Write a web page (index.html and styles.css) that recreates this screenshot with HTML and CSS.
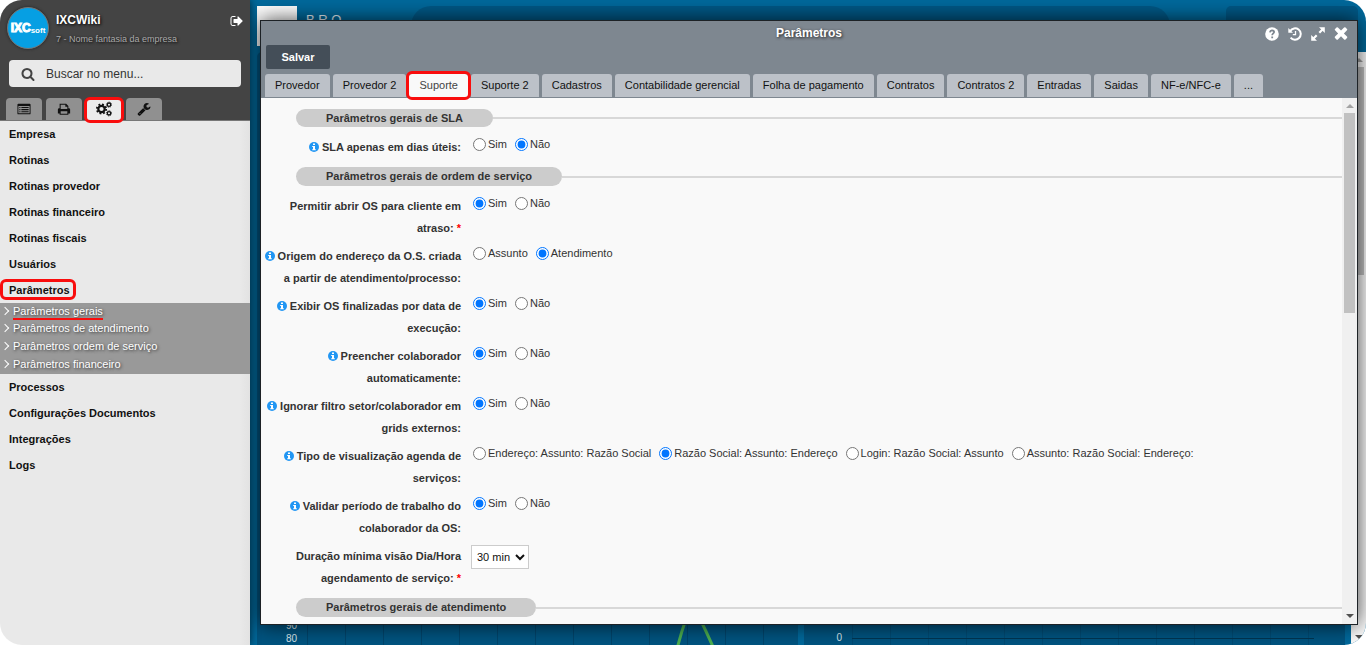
FILE: index.html
```html
<!DOCTYPE html>
<html lang="pt-BR">
<head>
<meta charset="utf-8">
<title>IXCWiki - Parâmetros</title>
<link rel="stylesheet" href="styles.css">
</head>
<body>
<svg class="defs" aria-hidden="true">
  <symbol id="info" viewBox="0 0 10 10"><circle cx="5" cy="5" r="5" fill="#2196f3"/><path d="M4 1.5h2v1.4H4zM3.2 4H6v3.2h.8v1H3.2v-1H4V5h-.8z" fill="#fff"/></symbol>
</svg>
<div class="app">
  <aside class="sidebar">
    <header class="side-head">
      <div class="profile">
        <div class="logo"><b>IXC</b><span>soft</span></div>
        <div class="who">
          <strong>IXCWiki</strong>
          <small>7 - Nome fantasia da empresa</small>
        </div>
        <button class="logout" aria-label="Sair"><svg viewBox="0 0 1792 1792"><path d="M704 1440q0 4 1 20t.5 26.5-3 23.5-10 19.5-20.5 6.5h-320q-119 0-203.5-84.5t-84.5-203.5v-704q0-119 84.5-203.5t203.5-84.5h320q13 0 22.5 9.5t9.5 22.5q0 4 1 20t.5 26.5-3 23.5-10 19.5-20.5 6.5h-320q-66 0-113 47t-47 113v704q0 66 47 113t113 47h312l11.5 1 11.5 3 8 5.5 7 9 2 13.5zm928-544q0 26-19 45l-544 544q-19 19-45 19t-45-19-19-45v-288h-448q-26 0-45-19t-19-45v-384q0-26 19-45t45-19h448v-288q0-26 19-45t45-19 45 19l544 544q19 19 19 45z"/></svg></button>
      </div>
      <label class="search">
        <svg viewBox="0 0 1792 1792"><path d="M1216 832q0-185-131.5-316.5t-316.5-131.5-316.5 131.5-131.5 316.5 131.5 316.5 316.5 131.5 316.5-131.5 131.5-316.5zm512 832q0 52-38 90t-90 38q-54 0-90-38l-343-342q-179 124-399 124-143 0-273.5-55.5t-225-150-150-225-55.5-273.5 55.5-273.5 150-225 225-150 273.5-55.5 273.5 55.5 225 150 150 225 55.5 273.5q0 220-124 399l343 343q37 37 37 90z"/></svg>
        <input type="text" placeholder="Buscar no menu..." aria-label="Buscar no menu">
      </label>
      <nav class="side-tabs">
        <button aria-label="Cadastros"><svg viewBox="0 0 16 16"><path fill-rule="evenodd" d="M1.500 2h13a1 1 0 0 1 1 1v10a1 1 0 0 1-1 1h-13a1 1 0 0 1-1-1V3a1 1 0 0 1 1-1zM1.600 4.600v8.300h12.800V4.600zM2.700 5.700h1.200v1.200H2.700zm2.300 0h8.300v1.200H5zM2.700 8.100h1.200v1.200H2.700zm2.300 0h8.300v1.200H5zm-2.300 2.400h1.200v1.200H2.700zm2.300 0h8.300v1.200H5z"/></svg></button>
        <button aria-label="Relatórios"><svg viewBox="0 0 16 16"><path fill-rule="evenodd" d="M3 2h7.500L13 4.500V7h.5A1.500 1.500 0 0 1 15 8.500V13h-2v1.500H3V13H1V8.500A1.500 1.500 0 0 1 2.500 7H3zm1.200 1.200V8h7.600V5.500H9.500V3.200zm0 7.300v2.800h7.600v-2.800z"/></svg></button>
        <button class="marked active" aria-label="Configurações"><svg viewBox="0 0 16 16" fill="none" stroke="#111"><circle cx="5.500" cy="8" r="3.200" stroke-width="2.200"/><circle cx="5.500" cy="8" r="4.700" stroke-width="1.800" stroke-dasharray="1.846 1.846"/><circle cx="13" cy="3.700" r="1.700" stroke-width="1.300"/><circle cx="13" cy="3.700" r="2.600" stroke-width=".8" stroke-dasharray="1.167 .875"/><circle cx="13" cy="12.300" r="1.700" stroke-width="1.300"/><circle cx="13" cy="12.300" r="2.600" stroke-width=".8" stroke-dasharray="1.167 .875"/></svg></button>
        <button aria-label="Ferramentas"><svg viewBox="0 0 1792 1792"><path d="M448 1472q0-26-19-45t-45-19-45 19-19 45 19 45 45 19 45-19 19-45zm644-420l-682 682q-37 37-90 37-52 0-91-37l-106-108q-38-36-38-90 0-53 38-91l681-681q39 98 114.500 173.500t173.500 114.500zm634-435q0 39-23 106-47 134-164.500 217.500t-258.500 83.500q-185 0-316.500-131.500t-131.500-316.500 131.500-316.500 316.500-131.500q58 0 121.500 16.500t107.500 46.500q16 11 16 28t-16 28l-293 169v224l193 107q5-3 79-48.500t135.500-81 70.500-35.500q15 0 23.500 10t8.500 25z"/></svg></button>
      </nav>
    </header>
    <ul class="menu">
      <li><a href="#">Empresa</a></li>
      <li><a href="#">Rotinas</a></li>
      <li><a href="#">Rotinas provedor</a></li>
      <li><a href="#">Rotinas financeiro</a></li>
      <li><a href="#">Rotinas fiscais</a></li>
      <li><a href="#">Usuários</a></li>
      <li><a href="#" class="marked">Parâmetros</a>
        <ul class="submenu">
          <li><a href="#" class="underlined">Parâmetros gerais</a></li>
          <li><a href="#">Parâmetros de atendimento</a></li>
          <li><a href="#">Parâmetros ordem de serviço</a></li>
          <li><a href="#">Parâmetros financeiro</a></li>
        </ul>
      </li>
      <li><a href="#">Processos</a></li>
      <li><a href="#">Configurações Documentos</a></li>
      <li><a href="#">Integrações</a></li>
      <li><a href="#">Logs</a></li>
    </ul>
  </aside>

  <main class="main">
    <div class="top">
      <div class="avatar"></div>
      <div class="top-name">B R O —</div>
      <div class="top-search"></div>
      <div class="top-box"></div>
    </div>
    <div class="dash">
      <section class="panel wide">
        <div class="axis"><span>90</span><span>80</span></div>
        <div class="plot"><svg viewBox="0 0 480 30"><path d="M370 34Q374 18 379 4M393 4Q400 18 407 34" fill="none" stroke="#4caf50" stroke-width="3"/></svg></div>
      </section>
      <section class="panel">
        <div class="axis"><span>0</span></div>
        <div class="plot base"></div>
      </section>
      <div class="bar page-bar"><i class="up"></i><i class="thumb"></i><i class="down"></i></div>
    </div>

    <section class="modal" role="dialog" aria-labelledby="title">
      <header class="modal-head">
        <div class="title-row">
          <h1 id="title">Parâmetros</h1>
          <div class="tools">
            <button aria-label="Ajuda"><svg viewBox="0 0 14 14"><circle cx="7" cy="7" r="6.800"/><path d="M4.900 5.300Q5.200 3.400 7.100 3.400 9.100 3.500 9.100 5.100C9.100 6.400 7.200 6.500 7.200 8.200M7.200 9.500v1.700" fill="none" stroke="#7e8790" stroke-width="1.800"/></svg></button>
            <button aria-label="Histórico"><svg viewBox="0 0 14 14"><path d="M.3 1v4.700H5z"/><path d="M2.200 4A5.700 5.700 0 1 1 2.600 10.600" fill="none" stroke="#fff" stroke-width="2"/><path d="M7.500 4v3.700H4.800" fill="none" stroke="#fff" stroke-width="1.300"/></svg></button>
            <button aria-label="Expandir"><svg viewBox="0 0 14 14"><path d="M8 .2h5.800V6zM.2 8v5.800H6z"/><path d="M12 2 8.300 5.700M2 12l3.700-3.700" stroke="#fff" stroke-width="2.200"/></svg></button>
            <button aria-label="Fechar"><svg viewBox="230 350 1330 1330"><path d="M1490 1322q0 40-28 68l-136 136q-28 28-68 28t-68-28l-294-294-294 294q-28 28-68 28t-68-28l-136-136q-28-28-28-68t28-68l294-294-294-294q-28-28-28-68t28-68l136-136q28-28 68-28t68 28l294 294 294-294q28-28 68-28t68 28l136 136q28 28 28 68t-28 68l-294 294 294 294q28 28 28 68z"/></svg></button>
          </div>
        </div>
        <button class="save">Salvar</button>
        <nav class="tabs">
          <button>Provedor</button><button>Provedor 2</button><button class="marked active">Suporte</button><button>Suporte 2</button><button>Cadastros</button><button>Contabilidade gerencial</button><button>Folha de pagamento</button><button>Contratos</button><button>Contratos 2</button><button>Entradas</button><button>Saidas</button><button>NF-e/NFC-e</button><button>...</button>
        </nav>
      </header>
      <div class="modal-body">
        <form class="form">
          <h2><span>Parâmetros gerais de SLA</span></h2>
          <div class="row">
            <div class="name" id="l1"><svg class="info"><use href="#info"/></svg> SLA apenas em dias úteis:</div>
            <div class="opts" role="radiogroup" aria-labelledby="l1"><label><input type="radio" name="r1">Sim</label><label><input type="radio" name="r1" checked>Não</label></div>
          </div>
          <h2><span>Parâmetros gerais de ordem de serviço</span></h2>
          <div class="row">
            <div class="name" id="l2">Permitir abrir OS para cliente em atraso: <em>*</em></div>
            <div class="opts" role="radiogroup" aria-labelledby="l2"><label><input type="radio" name="r2" checked>Sim</label><label><input type="radio" name="r2">Não</label></div>
          </div>
          <div class="row">
            <div class="name" id="l3"><svg class="info"><use href="#info"/></svg> Origem do endereço da O.S. criada a partir de atendimento/processo:</div>
            <div class="opts" role="radiogroup" aria-labelledby="l3"><label><input type="radio" name="r3">Assunto</label><label><input type="radio" name="r3" checked>Atendimento</label></div>
          </div>
          <div class="row">
            <div class="name" id="l4"><svg class="info"><use href="#info"/></svg> Exibir OS finalizadas por data de execução:</div>
            <div class="opts" role="radiogroup" aria-labelledby="l4"><label><input type="radio" name="r4" checked>Sim</label><label><input type="radio" name="r4">Não</label></div>
          </div>
          <div class="row">
            <div class="name" id="l5"><svg class="info"><use href="#info"/></svg> Preencher colaborador automaticamente:</div>
            <div class="opts" role="radiogroup" aria-labelledby="l5"><label><input type="radio" name="r5" checked>Sim</label><label><input type="radio" name="r5">Não</label></div>
          </div>
          <div class="row">
            <div class="name" id="l6"><svg class="info"><use href="#info"/></svg> Ignorar filtro setor/colaborador em grids externos:</div>
            <div class="opts" role="radiogroup" aria-labelledby="l6"><label><input type="radio" name="r6" checked>Sim</label><label><input type="radio" name="r6">Não</label></div>
          </div>
          <div class="row">
            <div class="name" id="l7"><svg class="info"><use href="#info"/></svg> Tipo de visualização agenda de serviços:</div>
            <div class="opts" role="radiogroup" aria-labelledby="l7"><label><input type="radio" name="r7">Endereço: Assunto: Razão Social</label><label><input type="radio" name="r7" checked>Razão Social: Assunto: Endereço</label><label><input type="radio" name="r7">Login: Razão Social: Assunto</label><label><input type="radio" name="r7">Assunto: Razão Social: Endereço:</label></div>
          </div>
          <div class="row">
            <div class="name" id="l8"><svg class="info"><use href="#info"/></svg> Validar período de trabalho do colaborador da OS:</div>
            <div class="opts" role="radiogroup" aria-labelledby="l8"><label><input type="radio" name="r8" checked>Sim</label><label><input type="radio" name="r8">Não</label></div>
          </div>
          <div class="row">
            <label class="name" for="dur">Duração mínima visão Dia/Hora agendamento de serviço: <em>*</em></label>
            <select id="dur"><option>30 min</option></select>
          </div>
          <h2><span>Parâmetros gerais de atendimento</span></h2>
        </form>
        <div class="bar form-bar"><i class="up"></i><i class="thumb"></i><i class="down"></i></div>
      </div>
    </section>
  </main>
</div>
</body>
</html>
```
FILE: styles.css
```css
* { box-sizing: border-box; }
body { margin: 0; background: #fff; font-family: "Liberation Sans", Arial, sans-serif; font-size: 11px; color: #333; }
button, input, select { font: inherit; color: inherit; }
button { border: 0; padding: 0; background: none; }
ul { list-style: none; margin: 0; padding: 0; }
a { color: inherit; text-decoration: none; }
svg { display: block; }
.defs { display: none; }
.app { display: flex; height: 100vh; border-radius: 22px; overflow: hidden; }

/* Red highlight frames */
.marked { position: relative; }
.marked::after { content: ""; position: absolute; inset: -3px; border: 3px solid #f90d0d; border-radius: 6px; z-index: 1; }

/* Sidebar */
.sidebar { width: 250px; flex: none; background: linear-gradient(to right, #e9e9e9 96%, #e2e2e2); box-shadow: 0 0 8px #000a; z-index: 1; }
.side-head { background: #444; border-bottom: 1px solid #777; padding: 7px 9px 0; }
.profile { display: flex; height: 53px; margin-left: -2px; align-items: flex-start; }
.logo { width: 42px; height: 42px; border: 1px solid #777; border-radius: 50%; background: #069fe3; color: #fff; display: flex; align-items: center; justify-content: center; font-size: 12px; box-shadow: 0 0 3px #222; }
.logo b { -webkit-text-stroke: 1px #fff; }
.logo span { font-size: 8px; padding-top: 4px; font-weight: bold; }
.who { flex: 1; padding: 6px 0 0 7px; text-shadow: 1px 1px 3px #000; }
.who strong { display: block; font-size: 12px; line-height: 14px; color: #fff; }
.who small { display: block; font-size: 9px; line-height: 12px; margin-top: 6px; color: #aaa; }
.logout { margin: 7px -3px 0 0; }
.logout svg { width: 14px; height: 14px; fill: #fff; }
.search { display: flex; align-items: center; height: 27px; background: #e9e9e9; border-radius: 4px; padding-left: 12px; }
.search svg { width: 14px; height: 14px; fill: #444; }
.search input { flex: 1; min-width: 0; border: 0; background: none; padding: 0 0 0 11px; font-size: 12px; outline: 0; }
.search input::placeholder { color: #333; opacity: 1; }
.side-tabs { display: flex; gap: 4px; margin: 11px 0 0 -3px; }
.side-tabs button { width: 36px; height: 22px; background: #909090; border-radius: 4px 4px 0 0; display: flex; align-items: center; justify-content: center; }
.side-tabs svg { width: 14px; height: 14px; fill: #111; }
.side-tabs .active { background: #ececec; }
.side-tabs .active svg { fill: none; width: 16px; height: 16px; }
.side-tabs .active::after { inset: -1px -2px -3px; }
.menu > li > a { display: inline-block; margin-left: 9px; line-height: 26px; font-weight: bold; color: #111; vertical-align: top; }
.menu > li > .marked::after { inset: 2px -6px 3px -9px; }
.submenu { background: #999; padding-bottom: 1px; color: #fff; text-shadow: 1px 1px 3px #333; }
.submenu li { display: flex; align-items: center; gap: 6px; line-height: 18px; padding-left: 2px; }
.submenu li:first-child { line-height: 16px; }
.submenu li::before { content: ""; width: 5px; height: 5px; margin-right: -1px; border: solid #fff; border-width: 1px 1px 0 0; transform: rotate(45deg); }
.underlined { position: relative; }
.underlined::after { content: ""; position: absolute; left: 0; right: 0; bottom: -1px; height: 2px; background: #f90d0d; }

/* Dashboard behind the window */
.main { flex: 1; min-width: 0; position: relative; background: #00699c; display: flex; flex-direction: column; }
.top { display: flex; padding: 6px 8px 0 7px; height: 52px; flex: none; }
.avatar { width: 40px; height: 40px; background: #fff; }
.top-name { width: 114px; padding: 6px 0 0 9px; color: #e8f2f8; font-size: 13px; }
.top-search { flex: 1; background: #005886; border-radius: 20px; margin-right: 56px; }
.top-box { width: 132px; background: #005886; border-radius: 5px; }
.dash { flex: 1; display: flex; padding-left: 7px; gap: 6px; min-height: 0; }
.panel { flex: 1; background: #005480; display: flex; align-items: flex-end; border-radius: 5px 5px 0 0; }
.axis { width: 48px; flex: none; color: #dce8ef; font-size: 10px; line-height: 15px; text-align: right; padding-right: 10px; }
.axis span { display: block; }
.wide .axis { width: 50px; line-height: 13px; }
.plot { flex: 1; height: 30px; overflow: hidden; background: repeating-linear-gradient(to right, #00456c 0 1px, transparent 1px 38px); }
.plot svg { width: 480px; height: 30px; }
.base { background: linear-gradient(#003552, #003552) 0 23px / 100% 1px no-repeat, repeating-linear-gradient(to right, #004b74 0 1px, transparent 1px 38px); margin-right: 31px; }

/* Scroll bars */
.bar { width: 15px; flex: none; background: #f0f0f0; display: flex; flex-direction: column; align-items: center; }
.bar .up, .bar .down { border: 4px solid transparent; }
.bar .up { border-top: 0; border-bottom-color: #a3a3a3; margin: 6px 0 5px; }
.bar .down { border-bottom: 0; border-top-color: #505050; margin: auto 0 6px; }
.bar .thumb { width: 11px; height: 38%; background: #c1c1c1; }
.page-bar .thumb { height: 35%; }
.page-bar { background: #fafafa; }

/* Parameters window */
.modal { position: absolute; inset: 20px 8px 20px 10px; border: 1px solid #1d2226; background: #f9f9f9; display: flex; flex-direction: column; box-shadow: 0 0 20px #000b; }
.modal-head { background: #7e8790; flex: none; padding: 0 4px; border-bottom: 1px solid #7e8790; }
.title-row { display: grid; grid-template-columns: 1fr auto 1fr; height: 24px; }
.title-row h1 { grid-column: 2; margin: 0; font-size: 12px; line-height: 24px; color: #fff; text-shadow: 1px 1px 3px #222; }
.tools { display: flex; align-items: flex-start; justify-content: flex-end; gap: 9px; padding: 6px 5px 0 0; }
.tools svg { width: 14px; height: 14px; fill: #fff; }
.save { display: block; margin-left: 1px; width: 64px; height: 24px; border-radius: 2px; background: #444e58; color: #fff; font-weight: bold; }
.tabs { display: flex; gap: 3px; margin-top: 5px; }
.tabs button { height: 23px; padding: 0 10px 1px; background: #bcc1c8; border-radius: 3px 3px 0 0; color: #111; white-space: nowrap; }
.tabs .active { background: #f9f9f9; color: #444; }
.modal-body { flex: 1; display: flex; min-height: 0; }
.form { flex: 1; min-width: 0; overflow: hidden; padding-top: 11px; }
.form h2 { display: flex; align-items: center; margin: 0 0 9px 35px; font-size: 11px; line-height: 19px; }
.form h2:first-child { line-height: 18px; }
.form h2 span { background: #ccc; border-radius: 10px; padding: 0 30px; }
.form h2::after { content: ""; flex: 1; height: 2px; background: #d8d8d8; }
.row { display: flex; align-items: flex-start; gap: 10px; margin-bottom: 6px; }
.row:has(+ h2) { margin-bottom: 9px; }
.name { width: 200px; flex: none; text-align: right; font-weight: bold; line-height: 22px; }
.name em { color: #f00; font-style: normal; }
.info { display: inline-block; width: 10px; height: 10px; vertical-align: -1px; }
.opts { display: flex; flex-wrap: wrap; gap: 8px; padding-left: 2px; }
.opts label { display: flex; align-items: center; gap: 2px; line-height: 17px; }
.opts input { width: 13px; height: 13px; margin: 0; }
select { width: 58px; height: 24px; border: 1px solid #ccc; background: #fff; color: #111; padding: 0 1px; }
```
